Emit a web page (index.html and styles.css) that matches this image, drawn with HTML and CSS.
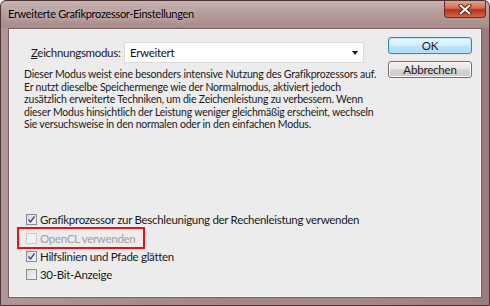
FILE: index.html
```html
<!DOCTYPE html>
<html lang="de">
  <head>
    <meta charset="UTF-8" />
    <meta name="viewport" content="width=device-width, initial-scale=1.0" />
    <title>Erweiterte Grafikprozessor-Einstellungen</title>
    <link rel="stylesheet" href="styles.css">
  </head>
  <body>
    <div class="window">
      <div class="titlebar">
        <span class="title">Erweiterte Grafikprozessor-Einstellungen</span>
        <button class="close-btn" aria-label="Schließen">
          <svg width="14" height="11" viewBox="0 0 14 11">
            <path d="M2.5 1.5 L11.5 9.5 M11.5 1.5 L2.5 9.5" stroke="#5a1d12" stroke-width="4" stroke-linecap="round" />
            <path d="M2.5 1.5 L11.5 9.5 M11.5 1.5 L2.5 9.5" stroke="#ffffff" stroke-width="2" stroke-linecap="round" />
          </svg>
        </button>
      </div>

      <div class="client">
        <div class="main">
          <div class="mode-row">
            <label class="mode-label"><u>Z</u>eichnungsmodus:</label>
            <div class="dropdown">
              <span>Erweitert</span>
              <span class="arrow"></span>
            </div>
          </div>

          <p class="description">
            Dieser Modus weist eine besonders intensive Nutzung des Grafikprozessors auf.<br>
            Er nutzt dieselbe Speichermenge wie der Normalmodus, aktiviert jedoch<br>
            zusätzlich erweiterte Techniken, um die Zeichenleistung zu verbessern. Wenn<br>
            dieser Modus hinsichtlich der Leistung weniger gleichmäßig erscheint, wechseln<br>
            Sie versuchsweise in den normalen oder in den einfachen Modus.
          </p>

          <div class="options">
            <div class="option">
              <span class="checkbox checked">
                <svg width="9" height="9" viewBox="0 0 9 9"><path d="M1.5 4.5 L3.5 7 L7.5 1.5" fill="none" stroke="#2a4a8e" stroke-width="1.3" /></svg>
              </span>
              <span>Grafikprozessor zur Beschleunigung der Rechenleistung verwenden</span>
            </div>
            <div class="option disabled marked">
              <span class="checkbox"></span>
              <span>OpenCL verwenden</span>
            </div>
            <div class="option">
              <span class="checkbox checked">
                <svg width="9" height="9" viewBox="0 0 9 9"><path d="M1.5 4.5 L3.5 7 L7.5 1.5" fill="none" stroke="#2a4a8e" stroke-width="1.3" /></svg>
              </span>
              <span>Hilfslinien und Pfade glätten</span>
            </div>
            <div class="option">
              <span class="checkbox"></span>
              <span>30-Bit-Anzeige</span>
            </div>
          </div>
        </div>

        <div class="buttons">
          <button class="btn default">OK</button>
          <button class="btn">Abbrechen</button>
        </div>
      </div>
    </div>
  </body>
</html>
```

FILE: styles.css
```css
* {
  margin: 0;
  padding: 0;
  box-sizing: border-box;
}

body {
  font-family: Lato, "Open Sans", sans-serif;
  background-color: #ffffff;
  width: 490px;
  height: 306px;
  overflow: hidden;
}

.window {
  width: 490px;
  height: 306px;
  display: flex;
  flex-direction: column;
  padding: 0 7px 7px;
  border: 1px solid #4e3434;
  border-radius: 6px 6px 0 0;
  background: linear-gradient(90deg, #b09797 0%, #a48686 45%, #a68989 70%, #9c7d7d 100%);
}

.titlebar {
  height: 27px;
  display: flex;
  align-items: flex-start;
  justify-content: space-between;
  margin: 0 -7px;
  padding-left: 7px;
  padding-right: 3px;
  background: linear-gradient(180deg, #c8b4b4 0%, #b69d9d 40%, #a88b8b 100%);
  border-radius: 6px 6px 0 0;
}

.title {
  font-size: 11px;
  letter-spacing: -0.3px;
  line-height: 26px;
  color: #000000;
  text-shadow: 0 0 6px rgba(255, 255, 255, 0.7);
}

.close-btn {
  width: 42px;
  height: 17px;
  border: 1px solid #6b2e24;
  border-top: none;
  border-radius: 0 0 4px 4px;
  background: linear-gradient(180deg, #e3a38e 0%, #d26a4f 45%, #b8301d 55%, #d3684a 100%);
  display: flex;
  justify-content: center;
  align-items: center;
}

.client {
  flex: 1;
  display: flex;
  background-color: #ececec;
  border: 1px solid #7b5c5c;
  box-shadow: inset 0 0 0 1px #f6f6f6;
  padding: 8px 9px 13px 15px;
}

.main {
  width: 340px;
  display: flex;
  flex-direction: column;
  padding-top: 5px;
}

.mode-row {
  display: flex;
  align-items: center;
  padding-left: 7px;
}

.mode-label {
  font-size: 11.5px;
  letter-spacing: -0.3px;
  color: #1a1a1a;
}

.dropdown {
  margin-left: auto;
  width: 240px;
  height: 21px;
  background-color: #ffffff;
  border: 1px solid #dadada;
  display: flex;
  align-items: center;
  justify-content: space-between;
  padding: 0 5px 0 5px;
  font-size: 11.5px;
  letter-spacing: -0.3px;
  color: #111111;
}

.arrow {
  width: 0;
  height: 0;
  border-left: 3.5px solid transparent;
  border-right: 3.5px solid transparent;
  border-top: 4px solid #1a1a1a;
}

.description {
  margin-top: 5px;
  font-size: 10.5px;
  letter-spacing: -0.2px;
  line-height: 12.5px;
  color: #1a1a1a;
  white-space: nowrap;
}

.options {
  margin-top: auto;
  display: flex;
  flex-direction: column;
}

.option {
  height: 18.3px;
  display: flex;
  align-items: center;
  gap: 3px;
  padding-left: 2px;
  font-size: 11.5px;
  letter-spacing: -0.3px;
  color: #1a1a1a;
  white-space: nowrap;
}

.option.disabled {
  color: #a0a0a0;
}

.marked {
  position: relative;
  align-self: flex-start;
}

.marked::after {
  content: "";
  position: absolute;
  top: -2px;
  bottom: -2px;
  left: -7px;
  right: -10px;
  border: 2px solid #e0121a;
}

.checkbox {
  width: 11px;
  height: 11px;
  border: 1px solid #8e8e8e;
  background: linear-gradient(135deg, #dcdcdc 0%, #f4f4f4 100%);
  display: flex;
  justify-content: center;
  align-items: center;
}

.option.disabled .checkbox {
  border-color: #cacaca;
  background: #f2f2f2;
}

.buttons {
  margin-left: auto;
  width: 84px;
  display: flex;
  flex-direction: column;
  gap: 7px;
}

.btn {
  height: 17px;
  font-family: inherit;
  font-size: 11.5px;
  letter-spacing: -0.2px;
  color: #1a1a1a;
  border: 1px solid #707070;
  border-radius: 3px;
  background: linear-gradient(180deg, #f4f1f1 0%, #e8e4e4 48%, #d8d2d2 52%, #cfc9c9 100%);
  box-shadow: inset 0 0 0 1px #faf8f8;
  line-height: 14px;
}

.btn.default {
  border-color: #3c7fb1;
  background: linear-gradient(180deg, #eaf6fd 0%, #d9f0fc 48%, #bee6fd 52%, #a7d9f5 100%);
  box-shadow: inset 0 0 0 1px #b8e4f8;
}
```
